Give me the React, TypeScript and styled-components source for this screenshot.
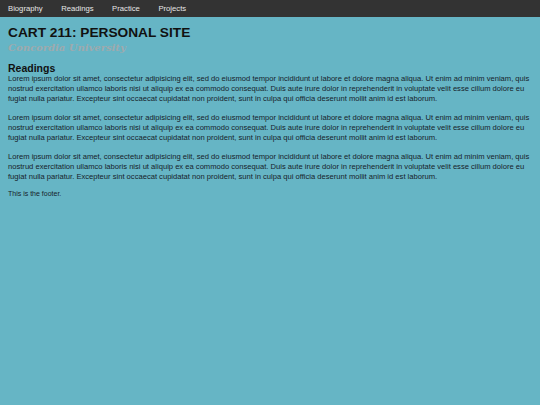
import styled, { createGlobalStyle } from "styled-components";

const GlobalStyle = createGlobalStyle`
  html, body {
    margin: 0;
    padding: 0;
    background-color: #66b5c5;
    font-family: "Liberation Sans", Arial, sans-serif;
  }
`;

const Nav = styled.nav`
  display: flex;
  background-color: #333333;
  height: 17px;
  align-items: center;
  padding: 0 0 0 8px;
  gap: 18.5px;
`;

const NavLink = styled.a`
  color: #e6e6e6;
  font-size: 7.7px;
  text-decoration: none;
`;

const Main = styled.main`
  padding: 8px 8px 0;
`;

const Title = styled.h1`
  margin: 0;
  font-size: 13.7px;
  line-height: 16px;
  color: #111111;
`;

const Subtitle = styled.h3`
  margin: 0;
  font-family: "DejaVu Serif", "Liberation Serif", serif;
  font-style: italic;
  font-weight: bold;
  font-size: 10px;
  line-height: 13px;
  color: #9eaaae;
`;

const SectionTitle = styled.h2`
  margin: 8px 0 0;
  font-size: 10.5px;
  line-height: 12px;
  color: #111111;
`;

const Paragraph = styled.p`
  margin: 0 0 9px;
  font-size: 7.6px;
  line-height: 10px;
  color: #16222a;

  &:last-of-type {
    margin-bottom: 7px;
  }
`;

const Footer = styled.footer`
  padding: 0 8px;
  font-size: 7px;
  line-height: 10px;
  color: #16222a;
`;

const lorem =
  "Lorem ipsum dolor sit amet, consectetur adipisicing elit, sed do eiusmod tempor incididunt ut labore et dolore magna aliqua. Ut enim ad minim veniam, quis nostrud exercitation ullamco laboris nisi ut aliquip ex ea commodo consequat. Duis aute irure dolor in reprehenderit in voluptate velit esse cillum dolore eu fugiat nulla pariatur. Excepteur sint occaecat cupidatat non proident, sunt in culpa qui officia deserunt mollit anim id est laborum.";

export default function App() {
  return (
    <>
      <GlobalStyle />
      <Nav>
        <NavLink href="#">Biography</NavLink>
        <NavLink href="#">Readings</NavLink>
        <NavLink href="#">Practice</NavLink>
        <NavLink href="#">Projects</NavLink>
      </Nav>
      <Main>
        <Title>CART 211: PERSONAL SITE</Title>
        <Subtitle>Concordia University</Subtitle>
        <SectionTitle>Readings</SectionTitle>
        <Paragraph>{lorem}</Paragraph>
        <Paragraph>{lorem}</Paragraph>
        <Paragraph>{lorem}</Paragraph>
      </Main>
      <Footer>This is the footer.</Footer>
    </>
  );
}
